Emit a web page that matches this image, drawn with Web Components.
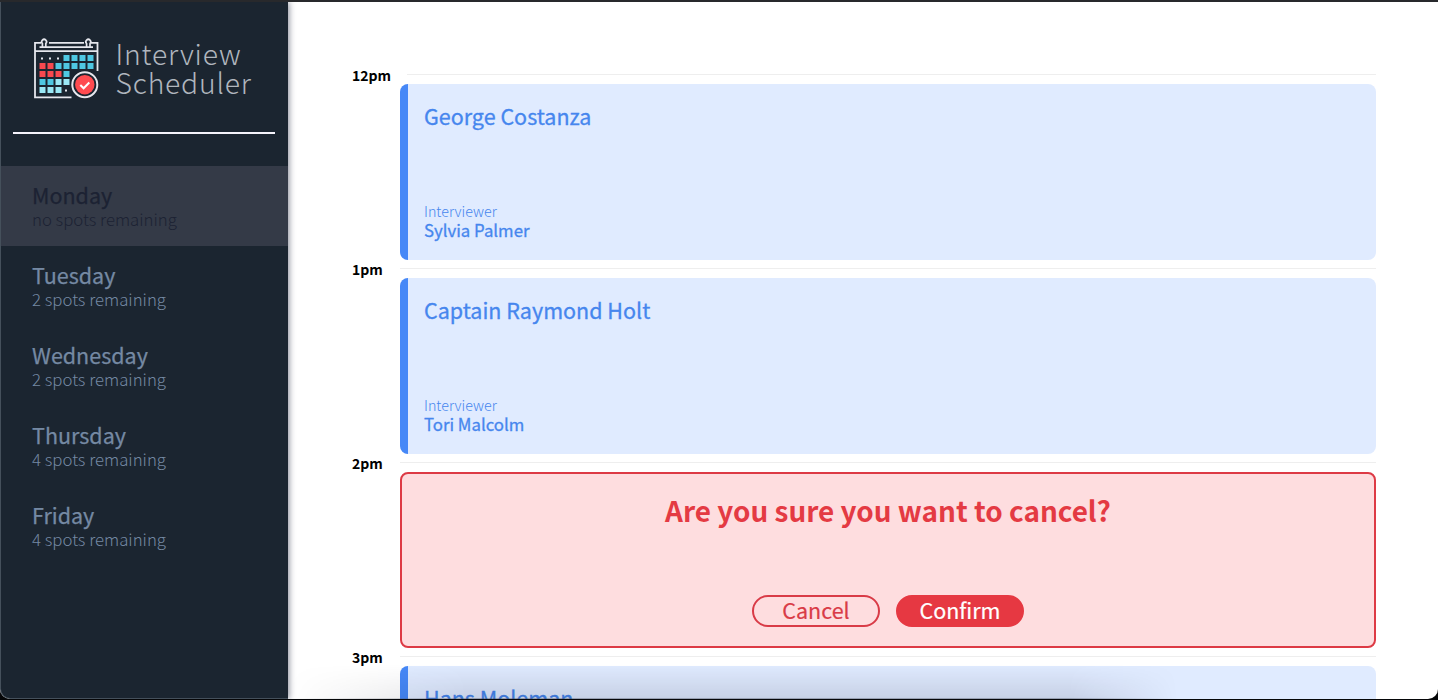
<!DOCTYPE html>
<html lang="en">
<head>
<meta charset="utf-8">
<title>Interview Scheduler</title>
<style>
html,body{margin:0;height:100%;overflow:hidden;background:#050608}
body{font-family:"Noto Sans CJK SC","Noto Sans",sans-serif;color:#000}
</style>
</head>
<body>
<scheduler-app>
  <side-bar slot="sidebar">
    <app-logo slot="logo"></app-logo>
    <day-item selected full name="Monday">no spots remaining</day-item>
    <day-item name="Tuesday">2 spots remaining</day-item>
    <day-item name="Wednesday">2 spots remaining</day-item>
    <day-item name="Thursday">4 spots remaining</day-item>
    <day-item name="Friday">4 spots remaining</day-item>
  </side-bar>
  <time-slot time="12pm"><interview-card student="George Costanza">Sylvia Palmer</interview-card></time-slot>
  <time-slot time="1pm"><interview-card student="Captain Raymond Holt">Tori Malcolm</interview-card></time-slot>
  <time-slot time="2pm"><confirm-card>Are you sure you want to cancel?
    <pill-button slot="actions">Cancel</pill-button>
    <pill-button slot="actions" solid>Confirm</pill-button></confirm-card></time-slot>
  <time-slot time="3pm"><interview-card compact student="Hans Moleman"></interview-card></time-slot>
</scheduler-app>
<script>
function define(name, html) {
  const tpl = document.createElement('template');
  tpl.innerHTML = html;
  customElements.define(name, class extends HTMLElement {
    constructor() {
      super();
      this.attachShadow({mode: 'open'}).append(tpl.content.cloneNode(true));
    }
    connectedCallback() {
      this.shadowRoot.querySelectorAll('[data-attr]').forEach(n => {
        n.textContent = this.getAttribute(n.dataset.attr) || '';
      });
    }
  });
}

define('scheduler-app', `<style>
:host{display:flex;position:relative;box-sizing:border-box;height:699px;border-top:2px solid #28292c;border-radius:0 0 10px 10px;overflow:hidden;background:#fff}
main{flex:1;min-width:0;padding:62px 62px 0 64px;overflow:hidden}
.shade{position:absolute;left:288px;right:60px;bottom:0;height:34px;pointer-events:none;border-bottom:1px solid rgba(60,65,80,.45);
background:linear-gradient(to bottom,rgba(0,0,20,0),rgba(0,0,20,.11));
-webkit-mask-image:linear-gradient(to right,transparent,#000 180px,#000 780px,transparent 890px);mask-image:linear-gradient(to right,transparent,#000 180px,#000 780px,transparent 890px)}
</style><slot name="sidebar"></slot><main><slot></slot></main><div class="shade"></div>`);

define('side-bar', `<style>
:host{display:block;box-sizing:border-box;width:288px;flex:none;background:#1b2530;border-left:1px solid #45505b;border-bottom:1px solid #45505b;border-bottom-left-radius:10px;box-shadow:1px 0 6px rgba(30,35,60,.55);position:relative}
header{height:130px}
hr{margin:0 13px 32px 12px;border:0;height:2px;background:#f5f3fb}
</style><header><slot name="logo"></slot></header><hr><nav><slot></slot></nav>`);

define('app-logo', `<style>
:host{display:flex;padding:35px 0 0 32px}
svg{flex:none;display:block}
.t{margin:1px 0 0 15.500px;font-weight:300;font-size:28.300px;line-height:29px;letter-spacing:.8px;color:#b0b6be}
.t span{display:block;white-space:nowrap}
</style>
<svg width="67" height="64" viewBox="0 0 67 64" fill="none">
 <g stroke="#e6e7ed" stroke-width="1.800">
  <path d="M8 5.800H2V60.300H38.500M58 5.800H64.500V34M16 5.800H51M6.500 10.200H60M2 14.200H64"/>
  <path d="M9.400 10V6.500a2.400 2.400 0 1 1 3.400 0V10M53.600 10V6.500a2.400 2.400 0 1 1 3.400 0V10" stroke-width="1.700"/>
 </g>
 <g fill="#e6e7ed"><path d="M8 20.500h2v2H8zM16 20.500h2v2h-2zM24 20.500h2v2h-2zM32 52.500h2v2h-2z"/></g>
 <g fill="#4fc8e2"><path d="M30.500 18h6v6h-6zM38.500 18h6v6h-6zM46.500 18h6v6h-6zM54.500 18h6v6h-6zM22.500 26h6v6h-6zM30.500 26h6v6h-6zM38.500 26h6v6h-6zM46.500 26h6v6h-6zM54.500 26h6v6h-6zM30.500 34h6v6h-6zM6.500 42h6v6h-6zM14.500 42h6v6h-6z"/></g>
 <g fill="#f7494f"><path d="M6.500 26h6v6h-6zM14.500 26h6v6h-6zM6.500 34h6v6h-6zM14.500 34h6v6h-6zM22.500 34h6v6h-6z"/></g>
 <g fill="#9ae8f5"><path d="M22.500 42h6v6h-6zM30.500 42h6v6h-6zM6.500 50h6v6h-6zM14.500 50h6v6h-6zM22.500 50h6v6h-6z"/></g>
 <circle cx="51.800" cy="47.700" r="14" fill="#1b2530"/>
 <circle cx="51.800" cy="47.700" r="12.500" stroke="#e6e7ed" stroke-width="2"/>
 <circle cx="51.800" cy="47.700" r="9.700" fill="#ff4b50"/>
 <path d="M47.300 48l3.300 3.300 5.700-5.800" stroke="#fff" stroke-width="2"/>
</svg>
<div class="t"><span>Interview</span><span>Scheduler</span></div>`);

define('day-item', `<style>
:host{display:block;box-sizing:border-box;height:80px;padding:18px 0 0 31px;color:#7589a3}
:host([selected]){background:#343a47}
:host([full]){color:#1c2233}
h2{margin:-1px 0 0;font-weight:400;font-size:21.500px;line-height:24px;-webkit-text-stroke:.25px}
div{font-weight:300;font-size:16.800px;line-height:24px}
</style><h2 data-attr="name"></h2><div><slot></slot></div>`);

define('time-slot', `<style>
:host{display:block;height:194px}
header{display:flex;align-items:center;height:20px}
h4{margin:2px 0 0;box-sizing:border-box;min-width:48px;padding-right:16px;font-weight:700;font-size:14px;line-height:20px}
i{flex:1;height:1px;background:#eee}
section{margin-left:48px}
</style><header><h4 data-attr="time"></h4><i></i></header><section><slot></slot></section>`);

define('interview-card', `<style>
:host{display:flex;flex-direction:column;justify-content:space-between;box-sizing:border-box;height:176px;border-left:8px solid #4688f7;border-radius:8px;background:#e0ebff;padding:20px 16px 20px;color:#4686ee}
:host([compact]) section{display:none}
h2{margin:0;font-weight:400;font-size:21.500px;line-height:24px;-webkit-text-stroke:.3px}
h4{margin:0;font-weight:300;font-size:14.300px;line-height:21px}
h3{margin:0;font-weight:400;font-size:16.800px;line-height:19px;-webkit-text-stroke:.3px}
</style><h2 data-attr="student"></h2><section><h4>Interviewer</h4><h3><slot></slot></h3></section>`);

define('confirm-card', `<style>
:host{display:flex;flex-direction:column;justify-content:space-between;align-items:center;box-sizing:border-box;height:176px;border:2px solid #dd3a45;border-radius:8px;background:#fedddf;padding:16px 0 19px;color:#e43a43}
h1{margin:0;font-weight:700;font-size:27.900px;line-height:40px}
section{display:flex;gap:16px}
</style><h1><slot></slot></h1><section><slot name="actions"></slot></section>`);

define('pill-button', `<style>
:host{display:block;box-sizing:border-box;width:128px;height:32px;border:2px solid #d93b47;border-radius:16px;text-align:center;font-size:21.500px;line-height:25px;color:#d93b47;-webkit-text-stroke:.2px}
:host([solid]){background:#e63842;border-color:#e63842;color:#fff}
</style><slot></slot>`);
</script>
</body>
</html>
